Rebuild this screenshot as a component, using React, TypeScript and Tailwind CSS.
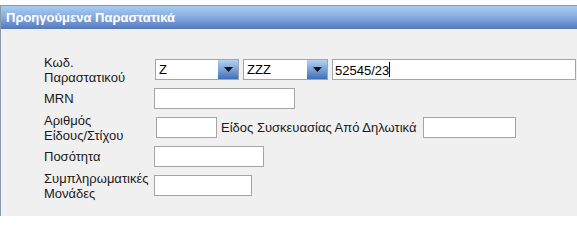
const font = { fontFamily: '"Liberation Sans", Arial, sans-serif' };

function Select({ value, width }: { value: string; width: string }) {
  return (
    <div className={`flex h-[21px] ${width} items-stretch border border-[#a5a5a5] bg-white`}>
      <span className="flex-1 pl-[3px] text-[13px] leading-[19px] text-black">{value}</span>
      <span className="flex w-[20px] items-center justify-center bg-gradient-to-b from-[#b4d2f2] via-[#7aa3d9] to-[#3f6fb5]">
        <svg width="9" height="5" viewBox="0 0 9 5">
          <path d="M0 0h9L4.5 5z" fill="#111" />
        </svg>
      </span>
    </div>
  );
}

function Field({ width, value }: { width: string; value?: string }) {
  return (
    <div className={`h-[21px] ${width} border border-[#a5a5a5] bg-white pl-[2px] text-[13px] leading-[19px] text-black`}>
      {value}
      {value && <span className="inline-block h-[15px] w-px translate-y-[2px] bg-black" />}
    </div>
  );
}

function Label({ children }: { children: React.ReactNode }) {
  return <div className="w-[110px] shrink-0 text-[13px] leading-[15px] text-[#1a1a1a]">{children}</div>;
}

export default function App() {
  return (
    <div className="h-[216px] w-[577px] overflow-hidden bg-white" style={font}>
      <div className="mt-[5px] h-[211px] border-l border-t border-[#8a9bab] bg-[#f0f0f0]">
        <div className="flex h-[23px] items-center bg-gradient-to-b from-[#a9cdf0] via-[#86aadf] to-[#5477bb] pl-[5px] text-[13px] font-bold text-white">
          Προηγούμενα Παραστατικά
        </div>
        <div className="flex flex-col pl-[43px] pt-[26px]">
          <div className="flex h-[29px] items-center">
            <Label>
              Κωδ.
              <br />
              Παραστατικού
            </Label>
            <div className="ml-[1px] flex items-center gap-[4px]">
              <Select value="Z" width="w-[84px]" />
              <Select value="ZZZ" width="w-[85px]" />
              <Field width="w-[244px]" value="52545/23" />
            </div>
          </div>
          <div className="flex h-[29px] items-center">
            <Label>MRN</Label>
            <Field width="w-[141px]" />
          </div>
          <div className="flex h-[29px] items-center">
            <Label>
              Αριθμός
              <br />
              Είδους/Στίχου
            </Label>
            <div className="ml-[2px] flex items-center">
              <Field width="w-[61px]" />
              <span className="ml-[4px] mr-[7px] text-[13px] text-[#1a1a1a]">Είδος Συσκευασίας Από Δηλωτικά</span>
              <Field width="w-[93px]" />
            </div>
          </div>
          <div className="flex h-[29px] items-center">
            <Label>Ποσότητα</Label>
            <Field width="w-[110px]" />
          </div>
          <div className="flex h-[29px] items-center">
            <Label>
              Συμπληρωματικές
              <br />
              Μονάδες
            </Label>
            <Field width="w-[98px]" />
          </div>
        </div>
      </div>
    </div>
  );
}
